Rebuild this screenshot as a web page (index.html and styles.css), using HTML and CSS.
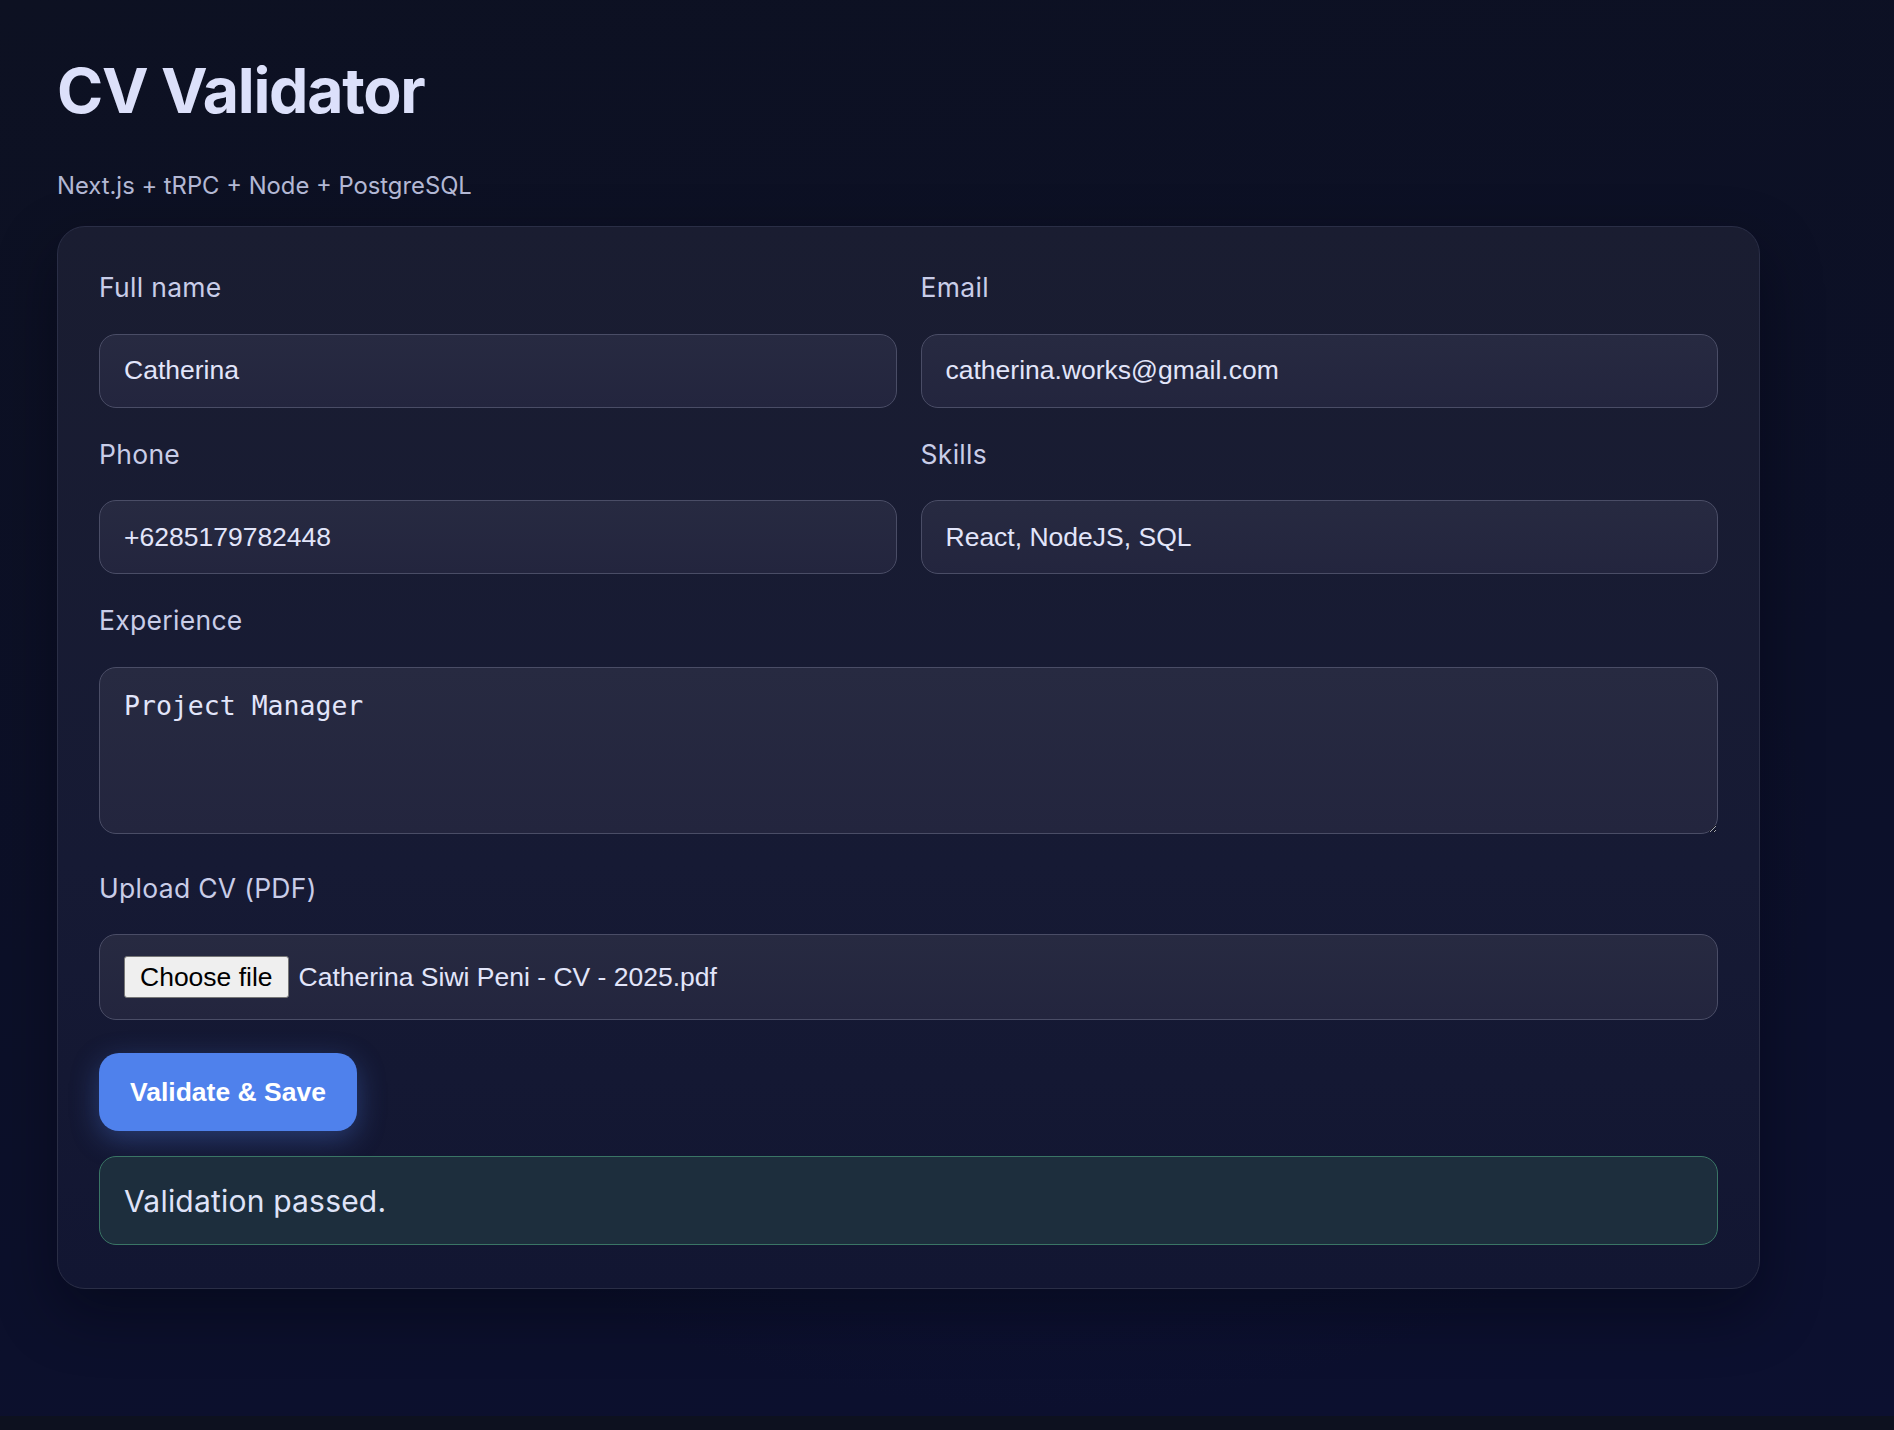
FILE: index.html
```html
<!DOCTYPE html>
<html lang="en">
<head>
<meta charset="utf-8">
<title>CV Validator</title>
<link rel="stylesheet" href="styles.css">
</head>
<body>
<main class="page">
  <h1 class="title">CV Validator</h1>
  <p class="subtitle">Next.js + tRPC + Node + PostgreSQL</p>
  <section class="card">
    <form class="form">
      <div class="grid">
        <div class="field">
          <label class="label">Full name</label>
          <input class="input" type="text" value="Catherina">
        </div>
        <div class="field">
          <label class="label">Email</label>
          <input class="input" type="text" value="catherina.works@gmail.com">
        </div>
        <div class="field">
          <label class="label">Phone</label>
          <input class="input" type="text" value="+6285179782448">
        </div>
        <div class="field">
          <label class="label">Skills</label>
          <input class="input" type="text" value="React, NodeJS, SQL">
        </div>
      </div>
      <div class="field field-area">
        <label class="label">Experience</label>
        <textarea class="textarea">Project Manager</textarea>
      </div>
      <div class="field">
        <label class="label">Upload CV (PDF)</label>
        <div class="filebox">
          <span class="choose">Choose file</span>
          <span class="filename">Catherina Siwi Peni - CV - 2025.pdf</span>
        </div>
      </div>
      <button class="submit" type="button">Validate &amp; Save</button>
      <div class="status">Validation passed.</div>
    </form>
  </section>
</main>
</body>
</html>
```

FILE: styles.css
```css
html {
  background: #0d111f;
}
body {
  margin: 0;
  min-height: 1416px;
  font-family: Inter, "Noto Sans", sans-serif;
  background:
    radial-gradient(ellipse 1100px 800px at 55% 60%, rgba(22, 28, 70, 0.55), rgba(22, 28, 70, 0) 70%),
    linear-gradient(170deg, #0d1122 0%, #0c1028 55%, #0c1030 100%);
  color: #dde2fb;
}
.page {
  padding: 52px 57px 40px;
}
.title {
  margin: 0;
  font-size: 62.5px;
  line-height: 77px;
  font-weight: 700;
  letter-spacing: -0.02em;
  color: #dce0fa;
}
.subtitle {
  margin: 43px 0 26px;
  font-size: 23.8px;
  line-height: 28px;
  color: #b3b8d4;
}
.card {
  box-sizing: border-box;
  width: 1703px;
  padding: 44px 41px 43px;
  border: 1px solid #2a2e46;
  border-radius: 28px;
  background: linear-gradient(180deg, #1a1d31 0%, #161a34 60%, #121632 100%);
  box-shadow: 0 24px 60px rgba(3, 5, 15, 0.45);
}
.form {
  display: flex;
  flex-direction: column;
  gap: 30px;
}
.grid {
  display: grid;
  grid-template-columns: 1fr 1fr;
  column-gap: 24px;
  row-gap: 30px;
}
.field {
  display: flex;
  flex-direction: column;
  gap: 30.5px;
}
.field-area {
  margin-bottom: 8px;
}
.label {
  font-size: 26.5px;
  line-height: 32px;
  letter-spacing: 0.3px;
  color: #c9cde8;
}
.input,
.textarea,
.filebox {
  box-sizing: border-box;
  width: 100%;
  border: 1.5px solid #4a4d66;
  border-radius: 17px;
  background: linear-gradient(180deg, #272a41 0%, #23253e 100%);
  color: #e2e5fa;
  font-family: "Liberation Sans", Arial, sans-serif;
  font-size: 26.5px;
  margin: 0;
}
.input {
  height: 74px;
  padding: 0 24px;
  outline: none;
}
.textarea {
  display: block;
  height: 167px;
  padding: 22px 24px;
  font-family: "DejaVu Sans Mono", monospace;
  resize: vertical;
  outline: none;
}
.filebox {
  height: 86px;
  padding: 0 24px;
  display: flex;
  align-items: center;
}
.choose {
  box-sizing: border-box;
  height: 42px;
  padding: 0 15px;
  line-height: 40px;
  background: #efefef;
  border: 1px solid #767676;
  border-radius: 3px;
  color: #000;
}
.filename {
  margin-left: 10px;
}
.submit {
  align-self: flex-start;
  height: 78px;
  margin-top: 3px;
  margin-bottom: -5px;
  padding: 0 31px;
  border: none;
  border-radius: 20px;
  background: #4f81ec;
  color: #fff;
  font-family: "Liberation Sans", Arial, sans-serif;
  font-weight: 700;
  font-size: 26.5px;
  box-shadow: 0 8px 28px rgba(79, 129, 236, 0.35);
}
.status {
  box-sizing: border-box;
  height: 89px;
  padding: 0 24px;
  display: flex;
  align-items: center;
  border: 1.5px solid #3a7565;
  border-radius: 17px;
  background: #1d2e3d;
  font-size: 30px;
  letter-spacing: 0.2px;
  color: #dfe3f8;
}
```
